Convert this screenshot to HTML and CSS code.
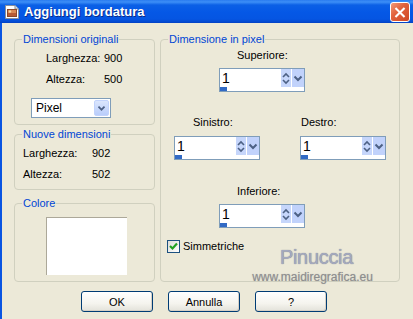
FILE: index.html
```html
<!DOCTYPE html>
<html>
<head>
<meta charset="utf-8">
<link rel="stylesheet" href="styles.css">
</head>
<body>
<div class="window">
  <div class="titlebar">
    <svg class="appicon" width="16" height="16" viewBox="0 0 16 16">
      <path d="M1.5 1.5 H11 L14.5 5 V14.5 H1.5 Z" fill="#fff" stroke="#8a8f99"/>
      <path d="M11 1.5 V5 H14.5" fill="#dfe3ea" stroke="#8a8f99"/>
      <rect x="3.5" y="5.5" width="9" height="7" fill="#d98a55" stroke="#8c4a2a"/>
      <rect x="4" y="9" width="8" height="3" fill="#b85c35"/>
      <circle cx="6" cy="7.5" r="1.2" fill="#f5d9a0"/>
    </svg>
    <span class="title">Aggiungi bordatura</span>
    <div class="close">
      <svg width="19" height="19" viewBox="0 0 19 19">
        <path d="M5.5 5.5 L13.5 13.5 M13.5 5.5 L5.5 13.5" stroke="#fff" stroke-width="2.2" stroke-linecap="square"/>
      </svg>
    </div>
  </div>
  <div class="body">
    <div class="cols">
      <div class="left">
        <fieldset class="fs fs-orig">
          <legend>Dimensioni originali</legend>
          <div class="kv kv-orig">
            <span>Larghezza:</span><span>900</span>
            <span>Altezza:</span><span>500</span>
          </div>
          <div class="select">
            <span class="select-text">Pixel</span>
            <span class="select-btn">
              <svg width="15" height="18" viewBox="0 0 15 18"><path d="M4 7.5 L7.5 11 L11 7.5" fill="none" stroke="#4d6185" stroke-width="2"/></svg>
            </span>
          </div>
        </fieldset>
        <fieldset class="fs fs-new">
          <legend>Nuove dimensioni</legend>
          <div class="kv kv-new">
            <span>Larghezza:</span><span>902</span>
            <span>Altezza:</span><span>502</span>
          </div>
        </fieldset>
        <fieldset class="fs fs-color">
          <legend>Colore</legend>
          <div class="swatch"></div>
        </fieldset>
      </div>
      <fieldset class="fs fs-px">
        <legend>Dimensione in pixel</legend>
        <div class="blk blk-sup">
          <div class="lbl lbl-sup">Superiore:</div>
          <div class="spin">
            <div class="spin-top">
              <span class="spin-val">1</span>
              <span class="spin-arrows"><svg width="10" height="17" viewBox="0 0 10 17"><path d="M2 7 L5 4 L8 7 M2 10 L5 13 L8 10" fill="none" stroke="#4d6185" stroke-width="1.6"/></svg></span>
              <span class="spin-dd"><svg width="12" height="17" viewBox="0 0 12 17"><path d="M2.5 6.5 L6 10 L9.5 6.5" fill="none" stroke="#4d6185" stroke-width="2"/></svg></span>
            </div>
            <div class="spin-bar"></div>
          </div>
        </div>
        <div class="row-mid">
          <div class="blk">
            <div class="lbl lbl-sin">Sinistro:</div>
            <div class="spin">
              <div class="spin-top">
                <span class="spin-val">1</span>
                <span class="spin-arrows"><svg width="10" height="17" viewBox="0 0 10 17"><path d="M2 7 L5 4 L8 7 M2 10 L5 13 L8 10" fill="none" stroke="#4d6185" stroke-width="1.6"/></svg></span>
                <span class="spin-dd"><svg width="12" height="17" viewBox="0 0 12 17"><path d="M2.5 6.5 L6 10 L9.5 6.5" fill="none" stroke="#4d6185" stroke-width="2"/></svg></span>
              </div>
              <div class="spin-bar"></div>
            </div>
          </div>
          <div class="blk">
            <div class="lbl lbl-des">Destro:</div>
            <div class="spin">
              <div class="spin-top">
                <span class="spin-val">1</span>
                <span class="spin-arrows"><svg width="10" height="17" viewBox="0 0 10 17"><path d="M2 7 L5 4 L8 7 M2 10 L5 13 L8 10" fill="none" stroke="#4d6185" stroke-width="1.6"/></svg></span>
                <span class="spin-dd"><svg width="12" height="17" viewBox="0 0 12 17"><path d="M2.5 6.5 L6 10 L9.5 6.5" fill="none" stroke="#4d6185" stroke-width="2"/></svg></span>
              </div>
              <div class="spin-bar"></div>
            </div>
          </div>
        </div>
        <div class="blk blk-inf">
          <div class="lbl lbl-inf">Inferiore:</div>
          <div class="spin">
            <div class="spin-top">
              <span class="spin-val">1</span>
              <span class="spin-arrows"><svg width="10" height="17" viewBox="0 0 10 17"><path d="M2 7 L5 4 L8 7 M2 10 L5 13 L8 10" fill="none" stroke="#4d6185" stroke-width="1.6"/></svg></span>
              <span class="spin-dd"><svg width="12" height="17" viewBox="0 0 12 17"><path d="M2.5 6.5 L6 10 L9.5 6.5" fill="none" stroke="#4d6185" stroke-width="2"/></svg></span>
            </div>
            <div class="spin-bar"></div>
          </div>
        </div>
        <div class="check-row">
          <span class="checkbox"><svg width="11" height="11" viewBox="0 0 11 11"><path d="M2 5 L4.5 7.5 L9 2.5" fill="none" stroke="#21a121" stroke-width="2.2"/></svg></span>
          <span class="check-label">Simmetriche</span>
        </div>
        <div class="watermark">
          <span class="wm-name">Pinuccia</span>
          <span class="wm-url">www.maidiregrafica.eu</span>
        </div>
      </fieldset>
    </div>
    <div class="buttons">
      <button class="btn">OK</button>
      <button class="btn">Annulla</button>
      <button class="btn">?</button>
    </div>
  </div>
</div>
</body>
</html>
```

FILE: styles.css
```css
* { box-sizing: border-box; }
html, body { margin: 0; padding: 0; }
body {
  width: 413px;
  height: 319px;
  overflow: hidden;
  font-family: "Liberation Sans", Arial, sans-serif;
  font-size: 11px;
  color: #000;
}
.window {
  width: 413px;
  height: 319px;
  display: flex;
  flex-direction: column;
  background: #ece9d8;
  position: relative;
}
.titlebar {
  height: 23px;
  flex: none;
  display: flex;
  align-items: center;
  padding-left: 4px;
  background: linear-gradient(#2a7cf0 0, #3d8ff7 2px, #0b60e6 5px, #0558e6 12px, #0555e2 19px, #0349d0 22px, #033fc0 23px);
  position: relative;
}
.appicon { flex: none; margin-top: 1px; }
.title {
  margin-left: 4px;
  color: #fff;
  font-weight: bold;
  font-size: 13px;
  text-shadow: 1px 1px 0 #0a2c8a;
  letter-spacing: 0;
}
.close {
  position: absolute;
  left: 390px;
  top: 2px;
  width: 20px;
  height: 20px;
  border: 1px solid #fff;
  border-radius: 3px;
  background: linear-gradient(135deg, #f19a78 0%, #e2633e 40%, #cf4622 100%);
  display: flex;
  align-items: center;
  justify-content: center;
}
.close svg { display: block; }
.body {
  flex: 1;
  border-left: 2px solid #0a55e2;
  padding: 10px 0 0 12px;
  display: flex;
  flex-direction: column;
}
.cols { display: flex; gap: 5px; }
.left { width: 141px; display: flex; flex-direction: column; }
.fs {
  margin: 0;
  padding: 0;
  min-width: 0;
  border: 1px solid #d0d0bf;
  border-radius: 4px;
}
.fs legend {
  color: #0046d5;
  font-size: 11px;
  line-height: 13px;
  padding: 0 1px;
  margin-left: 7px;
}
.fs-orig { height: 92px; }
.fs-new { height: 62px; margin-top: 3px; }
.fs-color { height: 85px; margin-top: 7px; }
.fs-px { width: 240px; height: 249px; position: relative; }

.kv {
  display: grid;
  row-gap: 8px;
  line-height: 13px;
}
.kv-orig {
  grid-template-columns: 58px auto;
  margin: 6px 0 0 31px;
}
.kv-new {
  grid-template-columns: 69px auto;
  margin: 6px 0 0 8px;
}
.select {
  margin: 12px 0 0 16px;
  width: 80px;
  height: 20px;
  border: 1px solid #7f9db9;
  background: #fff;
  display: flex;
  align-items: center;
  justify-content: space-between;
  padding: 1px;
}
.select-text { padding-left: 3px; font-size: 12px; }
.select-btn {
  width: 15px;
  height: 16px;
  border-radius: 2px;
  background: linear-gradient(#dbe6fd, #b9cdfb);
  border: 1px solid #c2d3fc;
  display: flex;
  align-items: center;
  justify-content: center;
  overflow: hidden;
}
.select-btn svg { display: block; }
.swatch {
  margin: 7px 0 0 31px;
  width: 81px;
  height: 58px;
  background: #fff;
  border-top: 1px solid #aca899;
  border-left: 1px solid #aca899;
}

.lbl { line-height: 13px; font-size: 11px; }
.blk { width: 86px; }
.blk-sup { margin: 3px 0 0 58px; }
.lbl-sup { margin-left: 18px; margin-bottom: 6px; }
.row-mid { display: flex; gap: 40px; margin: 24px 0 0 13px; }
.lbl-sin { margin-left: 19px; margin-bottom: 7px; }
.lbl-des { margin-left: 1px; margin-bottom: 7px; }
.blk-inf { margin: 25px 0 0 58px; }
.lbl-inf { margin-left: 18px; margin-bottom: 6px; }

.spin {
  width: 86px;
  height: 24px;
  border: 1px solid #7f9db9;
  background: #fff;
  display: flex;
  flex-direction: column;
}
.spin-top {
  height: 18px;
  display: flex;
  align-items: stretch;
}
.spin-val {
  flex: 1;
  font-size: 14px;
  line-height: 18px;
  padding-left: 2px;
}
.spin-arrows {
  width: 10px;
  background: #c6d6fb;
  display: flex;
  align-items: center;
}
.spin-dd {
  width: 12px;
  margin-left: 1px;
  background: #c1d2fb;
  display: flex;
  align-items: center;
}
.spin-arrows svg, .spin-dd svg { display: block; }
.spin-bar {
  margin-top: auto;
  width: 7px;
  height: 4px;
  background: #316ac5;
}

.check-row {
  display: flex;
  align-items: center;
  margin: 12px 0 0 6px;
}
.checkbox {
  width: 13px;
  height: 13px;
  border: 1px solid #1c5180;
  background: linear-gradient(135deg, #dcdcd7, #fff);
  display: flex;
  align-items: center;
  justify-content: center;
}
.checkbox svg { display: block; }
.check-label { margin-left: 3px; line-height: 13px; }

.watermark {
  position: absolute;
  left: 89px;
  top: 201px;
  width: 125px;
  display: flex;
  flex-direction: column;
  align-items: center;
  pointer-events: none;
}
.wm-name {
  font-size: 20px;
  line-height: 20px;
  letter-spacing: -0.3px;
  color: #a4a9bf;
  text-shadow: 0 0 1px #6e7386;
  margin-left: 8px;
}
.wm-url {
  font-size: 12px;
  line-height: 14px;
  color: #8e8e8e;
  margin-top: 3px;
  text-shadow: 0 0 1px #b0b0b0;
}

.buttons {
  display: flex;
  gap: 15px;
  margin: 9px 0 0 67px;
}
.btn {
  width: 72px;
  height: 21px;
  padding: 0;
  font-family: "Liberation Sans", Arial, sans-serif;
  font-size: 11px;
  color: #000;
  border: 1px solid #003c74;
  border-radius: 3px;
  background: linear-gradient(#ffffff 0%, #f5f4ee 60%, #e3e2da 100%);
  box-shadow: inset -1px -1px 0 #d6d0c5;
}
```
